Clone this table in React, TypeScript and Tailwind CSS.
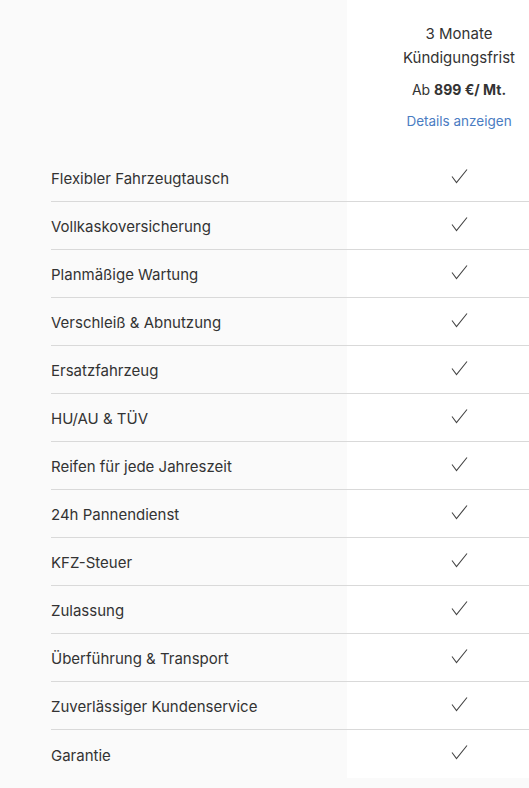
const features = [
  "Flexibler Fahrzeugtausch",
  "Vollkaskoversicherung",
  "Planmäßige Wartung",
  "Verschleiß & Abnutzung",
  "Ersatzfahrzeug",
  "HU/AU & TÜV",
  "Reifen für jede Jahreszeit",
  "24h Pannendienst",
  "KFZ-Steuer",
  "Zulassung",
  "Überführung & Transport",
  "Zuverlässiger Kundenservice",
  "Garantie",
];

function Check() {
  return (
    <svg width="17" height="16" viewBox="0 0 17 16" fill="none" className="text-[#444]">
      <path d="M1 8.5 L5.5 14.5 L16 1.5" stroke="currentColor" strokeWidth="1.1" />
    </svg>
  );
}

export default function App() {
  return (
    <div className="w-[529px] h-[788px] overflow-hidden bg-[#fafafa] text-[#333] font-['Inter',sans-serif]">
      <div className="flex w-[571px]">
        <div className="w-[347px] shrink-0" />
        <div className="w-[224px] shrink-0 bg-white pt-[22px] pb-[21px] flex flex-col items-center text-center">
          <div className="text-[15px] leading-6">3 Monate</div>
          <div className="text-[15px] leading-6">Kündigungsfrist</div>
          <div className="mt-[8px] text-[14px] leading-6">
            Ab <span className="font-bold">899 €/ Mt.</span>
          </div>
          <a className="mt-[7px] text-[13.5px] leading-6 text-[#4a7cc2]">Details anzeigen</a>
        </div>
      </div>
      <div className="ml-[51px] w-[520px]">
        {features.map((f, i) => (
          <div
            key={f}
            className={`flex h-[48px] ${i < features.length - 1 ? "border-b border-[#d9d9d9]" : ""}`}
          >
            <div className="w-[296px] shrink-0 pt-[4px] text-[15px] flex items-center">{f}</div>
            <div className="w-[224px] shrink-0 bg-white flex items-center justify-center pb-[4px]">
              <Check />
            </div>
          </div>
        ))}
      </div>
    </div>
  );
}
